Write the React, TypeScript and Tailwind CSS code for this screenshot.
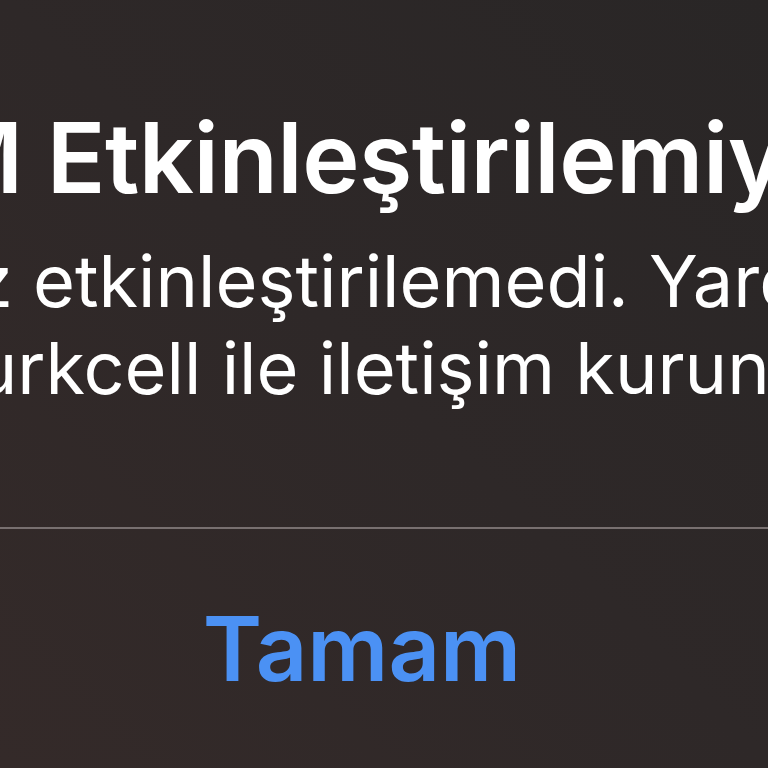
import React from "react";

export default function App() {
  return (
    <div
      className="w-[768px] h-[768px] overflow-hidden bg-gradient-to-bl from-[#292626] via-[#2e2828] to-[#342a29]"
      style={{ fontFamily: "Inter, 'Noto Sans', sans-serif" }}
    >
      <div className="w-[1500px] ml-[-388px] flex flex-col items-center text-center">
        <div className="pt-[108px] text-[97px] leading-[100px] font-semibold text-white tracking-[-0.5px] whitespace-nowrap">
          SIM Etkinleştirilemiyor
        </div>
        <div className="mt-[29px] text-[72px] leading-[87px] font-normal text-white whitespace-nowrap flex flex-col items-center">
          <div className="pl-[42px]">SIM'iniz etkinleştirilemedi. Yardım için</div>
          <div>Turkcell ile iletişim kurun.</div>
        </div>
      </div>
      <div className="mt-[116px] h-[2px] bg-[#787070]" />
      <div className="w-[1500px] ml-[-388px] flex justify-center pt-[70px]">
        <span className="text-[90px] leading-[100px] font-semibold text-[#4b91f4]">
          Tamam
        </span>
      </div>
    </div>
  );
}
